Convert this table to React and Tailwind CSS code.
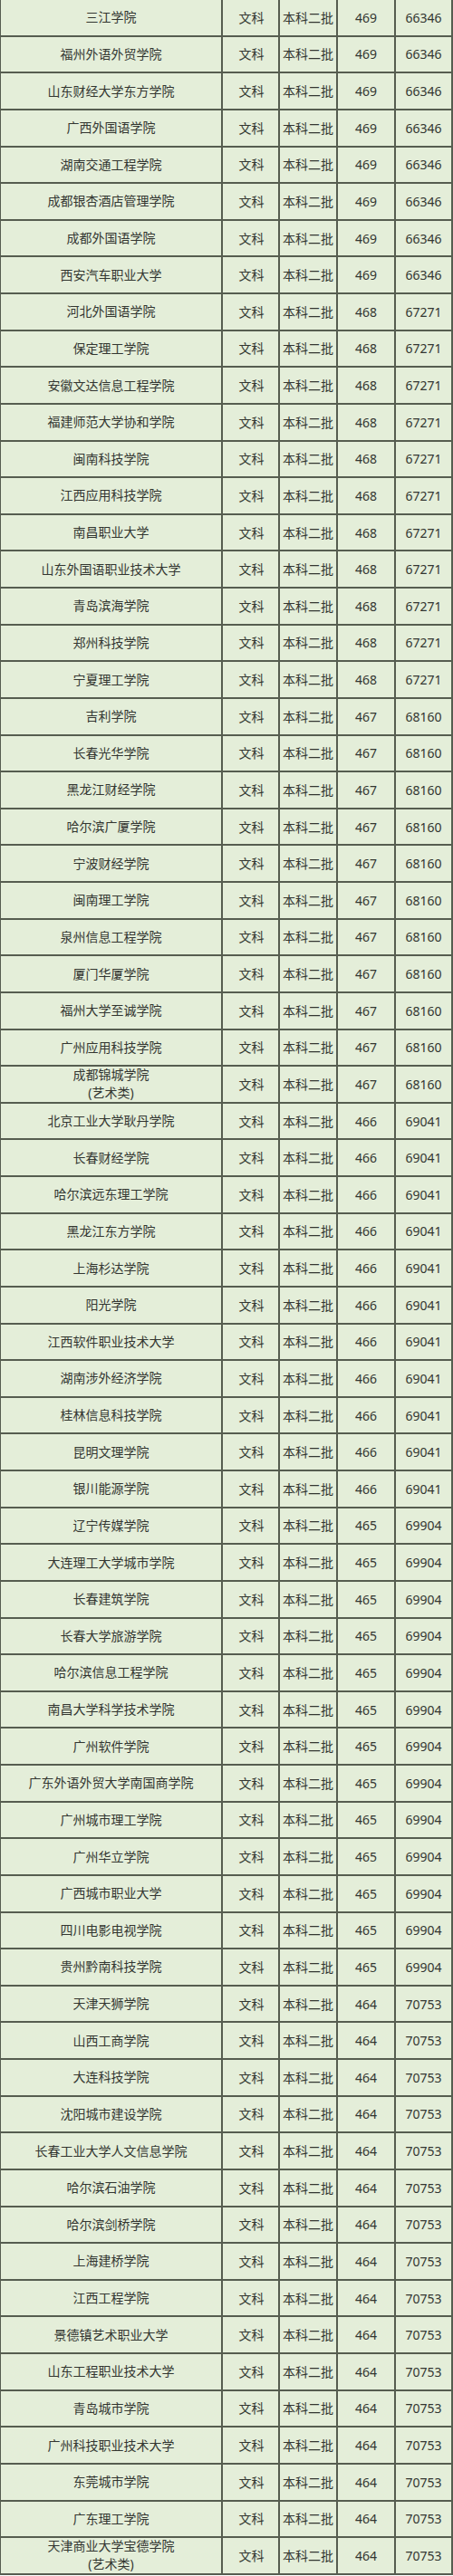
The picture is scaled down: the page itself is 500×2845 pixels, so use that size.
const groups = [
  {
    score: "469",
    rank: "66346",
    schools: [
      "三江学院",
      "福州外语外贸学院",
      "山东财经大学东方学院",
      "广西外国语学院",
      "湖南交通工程学院",
      "成都银杏酒店管理学院",
      "成都外国语学院",
      "西安汽车职业大学",
    ],
  },
  {
    score: "468",
    rank: "67271",
    schools: [
      "河北外国语学院",
      "保定理工学院",
      "安徽文达信息工程学院",
      "福建师范大学协和学院",
      "闽南科技学院",
      "江西应用科技学院",
      "南昌职业大学",
      "山东外国语职业技术大学",
      "青岛滨海学院",
      "郑州科技学院",
      "宁夏理工学院",
    ],
  },
  {
    score: "467",
    rank: "68160",
    schools: [
      "吉利学院",
      "长春光华学院",
      "黑龙江财经学院",
      "哈尔滨广厦学院",
      "宁波财经学院",
      "闽南理工学院",
      "泉州信息工程学院",
      "厦门华厦学院",
      "福州大学至诚学院",
      "广州应用科技学院",
      "成都锦城学院|(艺术类)",
    ],
  },
  {
    score: "466",
    rank: "69041",
    schools: [
      "北京工业大学耿丹学院",
      "长春财经学院",
      "哈尔滨远东理工学院",
      "黑龙江东方学院",
      "上海杉达学院",
      "阳光学院",
      "江西软件职业技术大学",
      "湖南涉外经济学院",
      "桂林信息科技学院",
      "昆明文理学院",
      "银川能源学院",
    ],
  },
  {
    score: "465",
    rank: "69904",
    schools: [
      "辽宁传媒学院",
      "大连理工大学城市学院",
      "长春建筑学院",
      "长春大学旅游学院",
      "哈尔滨信息工程学院",
      "南昌大学科学技术学院",
      "广州软件学院",
      "广东外语外贸大学南国商学院",
      "广州城市理工学院",
      "广州华立学院",
      "广西城市职业大学",
      "四川电影电视学院",
      "贵州黔南科技学院",
    ],
  },
  {
    score: "464",
    rank: "70753",
    schools: [
      "天津天狮学院",
      "山西工商学院",
      "大连科技学院",
      "沈阳城市建设学院",
      "长春工业大学人文信息学院",
      "哈尔滨石油学院",
      "哈尔滨剑桥学院",
      "上海建桥学院",
      "江西工程学院",
      "景德镇艺术职业大学",
      "山东工程职业技术大学",
      "青岛城市学院",
      "广州科技职业技术大学",
      "东莞城市学院",
      "广东理工学院",
      "天津商业大学宝德学院|(艺术类)",
    ],
  },
];

const rows = groups.flatMap((g) =>
  g.schools.map((name) => ({ name, score: g.score, rank: g.rank }))
);

const Row = ({ row }) => {
  const lines = row.name.split("|");
  return (
    <div className="flex h-[40.64px] border-b-2 border-[#565d50]">
      <div className="w-[246px] border-l border-r-2 border-[#565d50] flex flex-col items-center justify-center leading-[20px]">
        {lines.map((line, i) => (
          <span key={i}>{line}</span>
        ))}
      </div>
      <div className="w-[63px] border-r-2 border-[#565d50] flex items-center justify-center pl-[2px]">
        文科
      </div>
      <div className="w-[64px] border-r-2 border-[#565d50] flex items-center justify-center">
        本科二批
      </div>
      <div className="w-[64px] border-r-2 border-[#565d50] flex items-center justify-center">
        {row.score}
      </div>
      <div className="w-[63px] border-r-2 border-[#565d50] flex items-center justify-center">
        {row.rank}
      </div>
    </div>
  );
};

export default function App() {
  return (
    <div className="w-[500px] bg-[#e4eed9] text-[#333631] text-[14px] font-['Noto_Sans','Noto_Sans_CJK_SC',sans-serif]">
      {rows.map((row, index) => (
        <Row key={index} row={row} />
      ))}
    </div>
  );
}
